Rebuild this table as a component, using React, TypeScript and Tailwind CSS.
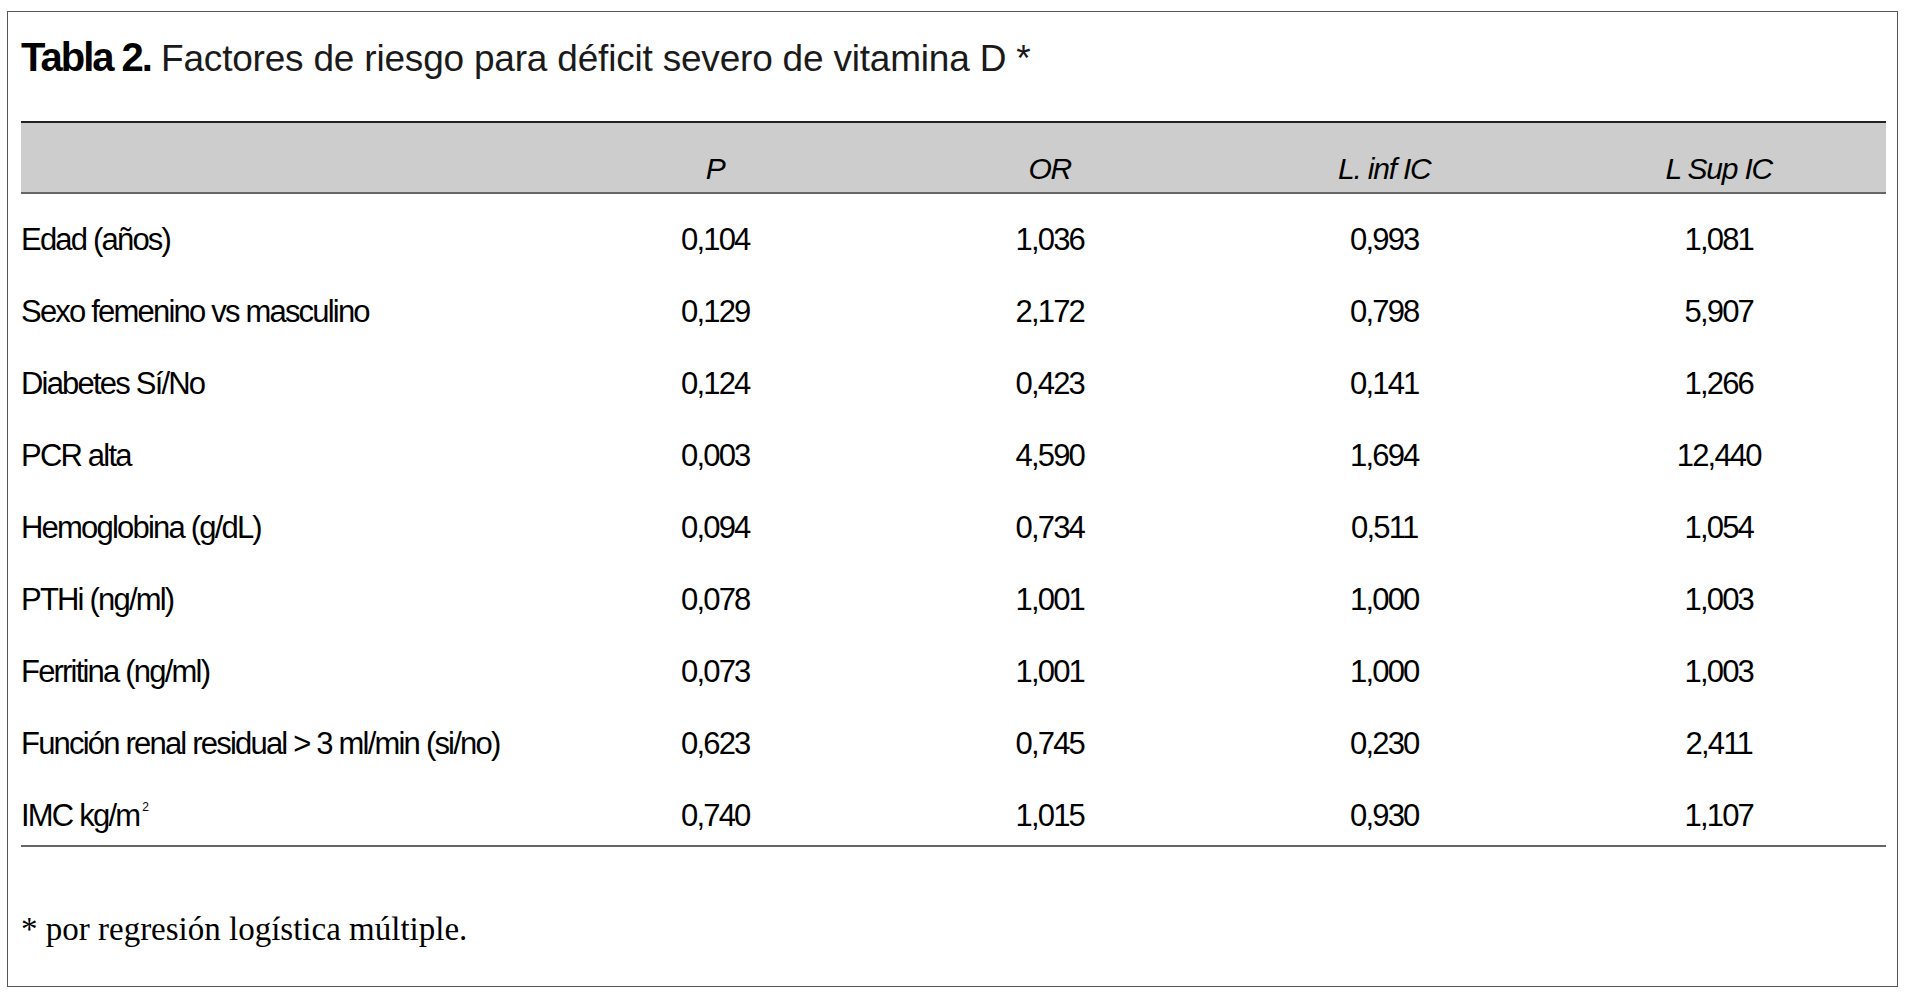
const rows: [string, string, string, string, string][] = [
  ['Edad (años)', '0,104', '1,036', '0,993', '1,081'],
  ['Sexo femenino vs masculino', '0,129', '2,172', '0,798', '5,907'],
  ['Diabetes Sí/No', '0,124', '0,423', '0,141', '1,266'],
  ['PCR alta', '0,003', '4,590', '1,694', '12,440'],
  ['Hemoglobina (g/dL)', '0,094', '0,734', '0,511', '1,054'],
  ['PTHi (ng/ml)', '0,078', '1,001', '1,000', '1,003'],
  ['Ferritina (ng/ml)', '0,073', '1,001', '1,000', '1,003'],
  ['Función renal residual > 3 ml/min (si/no)', '0,623', '0,745', '0,230', '2,411'],
  ['IMC kg/m', '0,740', '1,015', '0,930', '1,107'],
]

const headers = ['P', 'OR', 'L. inf IC', 'L Sup IC']

// sin fuente condensada instalada: Liberation Sans con tracking negativo
const sans = "font-['Liberation_Sans',Arial,sans-serif]"

export default function App() {
  return (
    <div className="min-h-screen w-full bg-white text-black">
      <div className="ml-[7px] mt-[11px] flex h-[976px] w-[1891px] flex-col border border-[#555] pl-[13px] pr-[11px]">
        <h1 className={`mt-[23px] h-[44px] whitespace-nowrap text-[37px] leading-[44px] font-normal ${sans}`}>
          <span className="text-[40px] font-bold tracking-[-2px]">Tabla 2.</span>
          <span className="tracking-[-0.2px] text-[#1a1a1a]">
            {' '}Factores de riesgo para déficit severo de vitamina D *
          </span>
        </h1>

        <div className={`mt-[42px] ${sans}`}>
          {/* cabecera gris */}
          <div className="grid h-[73px] grid-cols-[527px_repeat(4,1fr)] border-t-2 border-b-2 border-t-[#222] border-b-[#666] bg-[#cdcdcd]">
            <div />
            {headers.map((h) => (
              <div key={h} className="pt-[28px] text-center text-[30px] italic leading-[36px] tracking-[-1.2px]">
                {h}
              </div>
            ))}
          </div>

          <div className="border-b-2 border-[#666] pb-[3px]">
            {rows.map(([label, ...vals], i) => (
              <div
                key={label}
                className="grid h-[72px] grid-cols-[527px_repeat(4,1fr)] text-[31px] leading-[36px] tracking-[-1.8px]"
              >
                <div className="whitespace-nowrap pt-[28px]">
                  {label}
                  {i === rows.length - 1 && (
                    <span className="relative -top-[15px] ml-[3px] text-[12px] leading-none tracking-normal">2</span>
                  )}
                </div>
                {vals.map((v, j) => (
                  <div key={j} className="pt-[28px] text-center">
                    {v}
                  </div>
                ))}
              </div>
            ))}
          </div>
        </div>

        <p className="mt-[63px] text-[33px] leading-[38px] font-['Liberation_Serif','Times_New_Roman',serif]">
          * por regresión logística múltiple.
        </p>
      </div>
    </div>
  )
}
